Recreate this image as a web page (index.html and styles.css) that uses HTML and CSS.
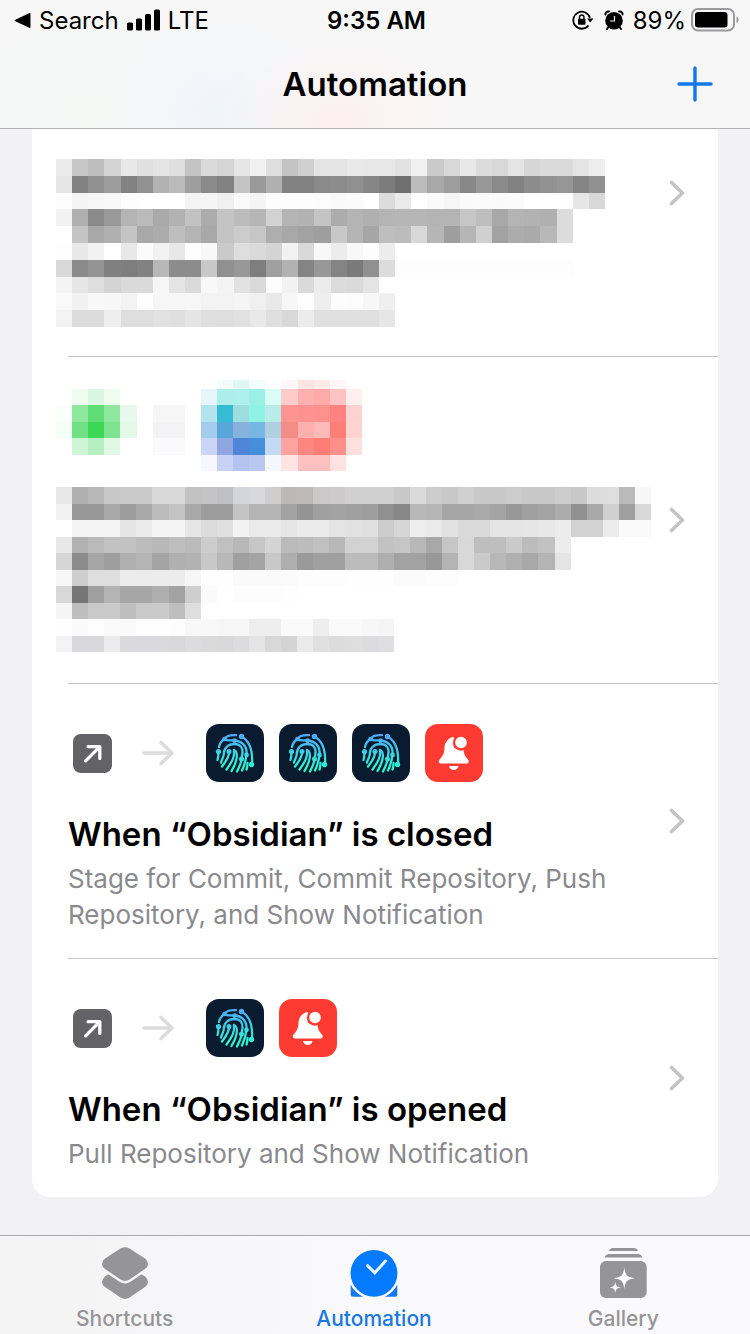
FILE: index.html
```html
<!DOCTYPE html>
<html lang="en">
<head>
<meta charset="utf-8">
<meta name="viewport" content="width=device-width, initial-scale=1">
<title>Automation</title>
<link rel="stylesheet" href="styles.css">
</head>
<body>
<svg class="defs" aria-hidden="true">
  <defs>
    <linearGradient id="print-ink" gradientUnits="userSpaceOnUse" x1="0" y1="10" x2="0" y2="44">
      <stop offset="0" stop-color="#4fa6fa"/>
      <stop offset="1" stop-color="#2cf6d0"/>
    </linearGradient>
    <symbol id="icon-print" viewBox="0 0 58 58">
      <rect width="58" height="58" rx="13" fill="#0a1a2f"/>
      <g fill="none" stroke="url(#print-ink)" stroke-width="2.300" stroke-linecap="round">
        <path d="M30 11.200C24 10.800 20 12.500 18.500 15C15.500 17 13.500 20 13 23"/>
        <path d="M35.500 12.500C43.500 17 47 25 46 40"/>
        <path d="M18.500 15C22 17.500 24 15.800 28.500 16.500C37 17 41.500 23 40.500 31"/>
        <path d="M28.500 16.500V20C22 20 17.800 24 17.800 30C17.800 33 15.500 36 15 38.500"/>
        <path d="M12.500 27.500C12.500 31 12.500 33 11.500 36"/>
        <path d="M28.500 20C34.500 20 37 24 36.500 29L35.500 35C35.500 39 33 43 31 47.500"/>
        <path d="M23 27.500C23.500 33 19.500 38 16 42.500"/>
        <path d="M28 26C29 34 25 39 20.500 45.500"/>
        <path d="M28 26C33 28 31 38 25.500 47"/>
        <path d="M40.500 31C40 35 39 40 36 46.500"/>
        <path d="M41.500 39C41.500 41 41.500 43 40.500 45.500"/>
      </g>
      <g fill="url(#print-ink)">
        <circle cx="35.500" cy="12.500" r="2.700"/>
        <circle cx="18.500" cy="15" r="2.300"/>
        <circle cx="28.500" cy="16.500" r="2.300"/>
        <circle cx="12.500" cy="27.500" r="2.600"/>
        <circle cx="23" cy="27.500" r="2.500"/>
        <circle cx="40.500" cy="31" r="2.400"/>
        <circle cx="35.500" cy="35" r="2.500"/>
        <circle cx="45.500" cy="40.500" r="2.700"/>
      </g>
    </symbol>
    <symbol id="icon-bell" viewBox="0 0 58 58">
      <rect width="58" height="58" rx="13" fill="#fe3b32"/>
      <path d="M29 13C23.500 13.500 19.800 18 19.500 23.500C19.300 29 18.300 31.500 15 35C13 37 13.500 39.500 16 39.500H41.500C44 39.500 44.500 37 42.500 35C39.500 31.800 38.800 29.500 38.500 25.500L29 24Z" fill="#fff"/>
      <path d="M24 42H33.500C33 44.800 31.200 46 28.700 46S24.500 44.800 24 42Z" fill="#fff"/>
      <circle cx="36" cy="18.500" r="8.200" fill="#fe3b32"/>
      <circle cx="36" cy="18.500" r="5.800" fill="#fff"/>
    </symbol>
    <symbol id="icon-open" viewBox="0 0 40 40">
      <rect width="40" height="40" rx="8" fill="#636367"/>
      <path d="M13 27.500L27 13.500M15.500 13H27.500V25" fill="none" stroke="#fff" stroke-width="3.400" stroke-linecap="round" stroke-linejoin="round"/>
    </symbol>
    <symbol id="icon-arrow" viewBox="0 0 32 28">
      <path d="M2 14H29M19 3.500L30 14L19 24.500" fill="none" stroke="#dcdcdd" stroke-width="3.600" stroke-linecap="round" stroke-linejoin="round"/>
    </symbol>
    <symbol id="icon-chevron" viewBox="0 0 16 26">
      <path d="M2.500 2.500L13.500 13L2.500 23.500" fill="none" stroke="#c4c4c6" stroke-width="3.600" stroke-linecap="round" stroke-linejoin="round"/>
    </symbol>
  </defs>
</svg>

<header class="top">
  <div class="status">
    <div class="status-left">
      <svg class="back" viewBox="0 0 16 14" aria-hidden="true"><path d="M1 7L15 .5V13.500Z" fill="#000" stroke="#000" stroke-linejoin="round"/></svg>
      <span>Search</span>
      <svg class="signal" viewBox="0 0 33 22" aria-hidden="true">
        <rect y="13.500" width="6" height="8" rx="1.500"/><rect x="9" y="9.500" width="6" height="12" rx="1.500"/><rect x="18" y="5" width="6" height="16.500" rx="1.500"/><rect x="27" y=".5" width="6" height="21" rx="1.500"/>
      </svg>
      <span>LTE</span>
    </div>
    <time class="clock">9:35 AM</time>
    <div class="status-right">
      <svg class="lock" viewBox="0 0 22 20" aria-hidden="true">
        <path d="M16.500 15.500A8.500 8.500 0 1 1 18 8" fill="none" stroke="#000" stroke-width="1.800"/>
        <path d="M15 8.500H21.500L18.200 12.500Z"/>
        <rect x="6" y="8.700" width="7.500" height="6" rx="1"/>
        <path d="M7.500 9V7.500A2.200 2.500 0 0 1 12 7.500V9" fill="none" stroke="#000" stroke-width="1.400"/>
      </svg>
      <svg class="alarm" viewBox="0 0 20 20" aria-hidden="true">
        <circle cx="10" cy="10.800" r="8.800"/>
        <path d="M1.500 4.500C1 3 3 1 5 1.500M18.500 4.500C19 3 17 1 15 1.500M4.500 17L3 19M15.500 17L17 19" stroke="#000" stroke-width="2" stroke-linecap="round" fill="none"/>
        <path d="M10.500 6V11H6" fill="none" stroke="#f7f7f8" stroke-width="1.200"/>
      </svg>
      <span>89%</span>
      <svg class="battery" viewBox="0 0 48 24" aria-hidden="true">
        <rect x="1" y="1" width="42" height="21.500" rx="6" fill="none" stroke="#9a9a9c" stroke-width="2"/>
        <rect x="4" y="4" width="32.500" height="15.500" rx="3"/>
        <path d="M45.500 8.500C48.300 9 48.300 14.500 45.500 15Z" fill="#9a9a9c"/>
      </svg>
    </div>
  </div>
  <div class="nav">
    <h1 class="title">Automation</h1>
    <button class="add" type="button" aria-label="New automation">
      <svg viewBox="0 0 36 36"><path d="M18 2V34M2 18H34" stroke="#1478e6" stroke-width="3.400" stroke-linecap="round"/></svg>
    </button>
  </div>
</header>

<main class="page">
  <ul class="card">
    <li class="item">
      <a class="row" href="#one" aria-label="Automation">
        <div class="body body-tall"><svg class="mosaic mosaic-a" data-mosaic="a" preserveAspectRatio="none"></svg></div>
        <svg class="chevron"><use href="#icon-chevron"/></svg>
      </a>
    </li>
    <li class="item">
      <a class="row" href="#two" aria-label="Automation">
        <div class="body body-mosaic">
          <svg class="mosaic mosaic-icons" data-mosaic="icons" preserveAspectRatio="none"></svg>
          <svg class="mosaic mosaic-b" data-mosaic="b" preserveAspectRatio="none"></svg>
        </div>
        <svg class="chevron"><use href="#icon-chevron"/></svg>
      </a>
    </li>
    <li class="item">
      <a class="row" href="#closed">
        <div class="body">
          <div class="flow">
            <svg class="open"><use href="#icon-open"/></svg>
            <svg class="arrow"><use href="#icon-arrow"/></svg>
            <div class="apps">
              <svg class="app"><use href="#icon-print"/></svg>
              <svg class="app"><use href="#icon-print"/></svg>
              <svg class="app"><use href="#icon-print"/></svg>
              <svg class="app"><use href="#icon-bell"/></svg>
            </div>
          </div>
          <h2 class="name">When “Obsidian” is closed</h2>
          <p class="detail">Stage for Commit, Commit Repository, Push Repository, and Show Notification</p>
        </div>
        <svg class="chevron"><use href="#icon-chevron"/></svg>
      </a>
    </li>
    <li class="item">
      <a class="row" href="#opened">
        <div class="body">
          <div class="flow">
            <svg class="open"><use href="#icon-open"/></svg>
            <svg class="arrow"><use href="#icon-arrow"/></svg>
            <div class="apps">
              <svg class="app"><use href="#icon-print"/></svg>
              <svg class="app"><use href="#icon-bell"/></svg>
            </div>
          </div>
          <h2 class="name">When “Obsidian” is opened</h2>
          <p class="detail">Pull Repository and Show Notification</p>
        </div>
        <svg class="chevron"><use href="#icon-chevron"/></svg>
      </a>
    </li>
  </ul>
</main>

<nav class="tabs">
  <a class="tab" href="#shortcuts">
    <svg class="tab-icon" viewBox="0 0 52 52" aria-hidden="true">
      <path fill="#959597" d="M21.500 19.500Q26 16.800 30.500 19.500L46 29.500Q52 35 46 40L30.500 50.500Q26 53.400 21.500 50.500L6 40Q0 35 6 29.500Z"/>
      <path fill="#959597" stroke="#f6f6f7" stroke-width="5" paint-order="stroke" d="M21.500 1.500Q26 -1.200 30.500 1.500L46 11.500Q52 17 46 22L30.500 32.500Q26 35.400 21.500 32.500L6 22Q0 17 6 11.500Z"/>
    </svg>
    <span>Shortcuts</span>
  </a>
  <a class="tab tab-on" href="#automation" aria-current="page">
    <svg class="tab-icon" viewBox="0 0 52 52" aria-hidden="true">
      <path d="M2.700 38H49.300V47.500Q49.300 49.700 47 49.700H5Q2.700 49.700 2.700 47.500Z" fill="#1478ee"/>
      <circle cx="26" cy="26.300" r="23.400" fill="#037aff" stroke="#fafafc" stroke-width="5" paint-order="stroke"/>
      <path d="M19.500 18.700L26.800 25.800L37.500 14" fill="none" stroke="#eaf4ff" stroke-width="3" stroke-linecap="round"/>
    </svg>
    <span>Automation</span>
  </a>
  <a class="tab" href="#gallery">
    <svg class="tab-icon" viewBox="0 0 52 52" aria-hidden="true">
      <g fill="#959597">
        <path d="M12 4Q13 1 16 1H37Q40 1 41 4Z"/>
        <path d="M7.700 10.500Q8.500 7 12 7H41Q44.500 7 45.300 10.500Z"/>
        <rect x="3" y="14" width="46.700" height="37" rx="6"/>
      </g>
      <path fill="#fafafc" d="M27.300 20.500C28.500 28.500 30 30 38 31.300C30 32.600 28.500 34 27.300 42C26.100 34 24.600 32.600 16.600 31.300C24.600 30 26.100 28.500 27.300 20.500Z"/>
      <path fill="#fafafc" d="M18.300 34.800C19 39 19.600 39.700 23.800 40.400C19.600 41.100 19 41.800 18.300 46C17.600 41.800 17 41.100 12.800 40.400C17 39.700 17.600 39 18.300 34.800Z"/>
    </svg>
    <span>Gallery</span>
  </a>
</nav>
<script src="mosaic.js"></script>
</body>
</html>
```
FILE: styles.css
```css
* { box-sizing: border-box; }

body {
  margin: 0;
  height: 100vh;
  display: flex;
  flex-direction: column;
  overflow: hidden;
  background: #f1f1f6;
  color: #000;
  font-family: Inter, "Liberation Sans", sans-serif;
}

a { color: inherit; text-decoration: none; }
svg { display: block; flex: none; }
.defs { position: absolute; width: 0; height: 0; }

.top {
  flex: none;
  position: relative;
  z-index: 1;
  border-bottom: 1px solid #b2b2b8;
  background:
    radial-gradient(ellipse 120px 80px at 340px 120px, #fdf0f0, transparent),
    radial-gradient(ellipse 110px 90px at 220px 110px, #f0f5fa, transparent),
    radial-gradient(ellipse 120px 90px at 90px 110px, #f4f8f5, transparent),
    #f7f7f8;
}

.status {
  display: grid;
  grid-template-columns: 1fr auto 1fr;
  align-items: center;
  height: 40px;
  padding: 0 11px 0 14px;
  font-size: 24px;
}
.status-left, .status-right { display: flex; align-items: center; gap: 8px; }
.status-right { justify-content: flex-end; gap: 5px; }
.back { width: 17px; height: 15px; }
.signal { width: 33px; height: 22px; }
.clock { font-weight: 600; }
.lock { width: 22px; height: 20px; margin-right: 5px; }
.alarm { width: 20px; height: 20px; margin-right: 4px; }
.battery { width: 48px; height: 24px; }

.nav {
  display: grid;
  grid-template-columns: 1fr auto 1fr;
  align-items: center;
  height: 88px;
  padding: 0 37px;
}
.title { grid-column: 2; margin: 0; font-size: 33px; font-weight: 600; }
.add { justify-self: end; padding: 0; border: 0; background: none; }
.add svg { width: 36px; height: 36px; }

.page {
  flex: 1;
  min-height: 0;
  display: flex;
  flex-direction: column;
  justify-content: flex-end;
  padding: 0 32px 38px;
}

.card {
  flex: none;
  margin: 0;
  padding: 0;
  list-style: none;
  background: #fff;
  border-radius: 18px;
}
.item { padding-left: 36px; }
.row {
  display: flex;
  align-items: center;
  gap: 16px;
  padding-right: 33px;
  border-bottom: 1px solid #c6c6c8;
}
.item:last-child .row { border-bottom: 0; }
.body { flex: 1; min-width: 0; padding: 40px 0 25px; }
.body-tall { padding: 129px 0 29px; }
.body-mosaic { padding: 23px 0 31px; }
.chevron { width: 16px; height: 26px; }

.flow { display: flex; align-items: center; padding-left: 5px; }
.open { width: 39px; height: 39px; }
.arrow { width: 32px; height: 28px; margin: 0 32px 0 30px; }
.apps { display: flex; gap: 15px; }
.app { width: 58px; height: 58px; }

.name { margin: 31px 0 6px; font-size: 33px; line-height: 42px; font-weight: 600; }
.detail { margin: 0; font-size: 26px; line-height: 36px; color: #8a8a8e; }

.mosaic { margin-left: -12px; shape-rendering: crispEdges; }
.mosaic-a { width: 549px; height: 168px; }
.mosaic-icons { width: 306px; height: 91px; margin-bottom: 16px; }
.mosaic-b { width: 595px; height: 165px; }

.tabs {
  flex: none;
  display: grid;
  grid-template-columns: 1fr 1fr 1fr;
  height: 99px;
  padding: 11px 2px 0 0;
  border-top: 1px solid #a9a9ae;
  background: linear-gradient(90deg, #f3f3f4, #fafafc 55%);
}
.tab {
  display: flex;
  flex-direction: column;
  align-items: center;
  gap: 8px;
  font-size: 21px;
  line-height: 24px;
  font-weight: 500;
  color: #959597;
}
.tab-on { color: #1a78e0; }
.tab-icon { width: 52px; height: 52px; }
```
FILE: mosaic.js
```js
// Redacted content, one row of cells per line. Two-digit entries are greys,
// six-digit entries are full colours, "." leaves the cell empty.
const mosaics = {
  a: { columns: 34, rows: [
    "eb c6 be d4 e8 e0 e4 de c4 da d6 e6 f0 de c4 d0 e4 e4 e9 e8 e8 e2 f0 ca d8 e8 dc d8 e4 d6 da da e4 ee",
    "e6 82 90 9c 82 92 b2 ba 9e 8a 82 c4 9a b0 82 82 8a 8c 90 86 7c 70 bc a8 9e 88 98 8a 82 8c 92 96 84 90",
    "fd f4 f7 f8 fc ff ff ff f4 f5 f0 fa f4 fd fd fd fc fa fb ff dc ea ff fa f6 fa fb fa fb ff ff ff e6 d8",
    "f2 b0 8a 9a b4 ba aa b2 c2 ac c4 bc b6 d2 b4 b2 c4 ac b4 b0 b4 b6 b6 b4 b4 c6 be a8 b4 b2 b0 dc",
    "ff c4 a8 b0 c4 a8 ac be b4 a8 c4 cc c6 ae a8 a2 9e c8 b4 a6 be bc d8 b6 9e b6 d0 a2 ac aa b8 dc",
    "fe e8 f2 ff e8 fb f2 e8 fe f8 ca de da d4 f2 d8 f8 ec f8 fd ec",
    "d8 8a 94 80 7e 82 b8 8c 8c c8 90 98 7e a0 b2 84 98 84 7a 90 dc fd fd fd fd fd fd fd fd fd fd fd",
    "f4 e6 de d4 da da f6 e4 da f8 f4 e2 da fd f2 da ec dc da e4",
    "f9 f1 f8 f7 f3 fe f6 f6 f6 f3 f3 f5 f0 e9 f7 fe ee fd fc f7 ef",
    "f3 dc dc ee de de e1 df e5 df de e1 e9 df d8 ec e0 e0 e0 e0 e6"
  ] },
  b: { columns: 37, rows: [
    "e8 b0 b8 c8 ca ca d8 d8 c2 c4 c0c0c4 d4d6dc d8d8de ce bcb8b8 beb8b6 cac8c8 cccaca d0 d0 d0 c8 da cc c8 d0 c8 c8 cc c8 c8 cc c8 dc de ba f7",
    "f2 98 98 a8 9c a8 bc c4 a8 9c 9c c4 b4 b4 a2 94 a0 a2 a0 9e 90 88 b8 b6 a6 a6 aa a4 98 a0 a4 ac 90 a8 d0 a0 d8",
    "ff f4 f4 f4 e4 ea f4 f4 e6 dc e0 f2 ea ea e6 ea ea e4 e2 e0 cc d6 ee ea e2 da da e4 e4 e6 e8 ec d2 d2 ec fa fa",
    "e8 b2 ba c2 c2 bc b8 be ba cc c0 b8 c6 d4 ba bc c0 b8 d2 d2 c2 c6 b8 a8 c6 d8 be be ca bc c2 ec",
    "d6 8c a6 9e b0 b4 a4 b0 b2 c8 b8 a0 a4 c8 ae 9a a0 a0 bc bc ae a2 a2 98 b4 d8 ca b8 b0 a8 b4 e4",
    "f6 ce de de ec ec ec ec f6 fe fe fa fa fa fb fd fd fd fe fe fe fb fb fd fd",
    "d8 76 a0 b4 a6 a6 ae a2 ce fa ff fd fd fd fe",
    "f5 be ca ca be ca ca be de",
    "fe fa fe fa f9 fe fe fc f8 f8 f6 f6 ee ee fa fa ee fa fa f7 f5",
    "f3f3f6 d8d8da d8d8da ec dadadc dadadc dadadc d8 dcdcde da d8 dcdcde e4 d8 d4 ea e0 dc de dcdcde dedee0"
  ] },
  icons: { columns: 19, rows: [
    ". . . . . . . . . . f2fdfb e0f8f5 f2fefc . fff7f7 ffe4e4 ffeaea fff7f7",
    ". f0fcf2 daf6e0 f0fcf2 . . . . . e6f6fa aeeeea aef0ea 9af0e4 dcfcf8 fecaca feb0b0 feaaa8 fec4c4 fff0f0",
    "fafffb 8ee89e 5edc76 90e8a0 e8f8ec . f6f6f7 f6f6f7 . b2e4ee 36bcd2 9edee0 90f2e4 b8ece8 fe9492 fe9290 fe908e fe8280 fed2d2",
    "f6fef8 70e084 3ed656 7ee490 e4f8e8 . f3f3f5 f3f3f5 . a4ccec 5aa6d8 86b2dc 76b8e2 b0d0e0 f48c88 feb0ae febab8 fe7e78 fed4d2",
    ". cef6d6 b6f0c2 e0f8e4 . . fafafc fafafc . cad4f4 90a6e0 5086d8 448edc c2daf4 fea4a0 fe8680 fe7e76 fe908c fee0de",
    ". . . . . . . . . f6f8fe c8d2f4 b4c4f0 b8c8f0 f2f8fe fee4e2 fec0be fec0be fee2e2"
  ], crop: 0.45 }
};

for (const svg of document.querySelectorAll("[data-mosaic]")) {
  const { columns, rows, crop = 0 } = mosaics[svg.dataset.mosaic];
  svg.setAttribute("viewBox", `0 ${crop} ${columns} ${rows.length - crop}`);
  rows.forEach((line, y) => line.split(" ").forEach((value, x) => {
    if (value === ".") return;
    const cell = document.createElementNS("http://www.w3.org/2000/svg", "rect");
    cell.setAttribute("x", x);
    cell.setAttribute("y", y);
    cell.setAttribute("width", 1);
    cell.setAttribute("height", 1);
    cell.setAttribute("fill", "#" + (value.length === 2 ? value.repeat(3) : value));
    svg.append(cell);
  }));
}
```
